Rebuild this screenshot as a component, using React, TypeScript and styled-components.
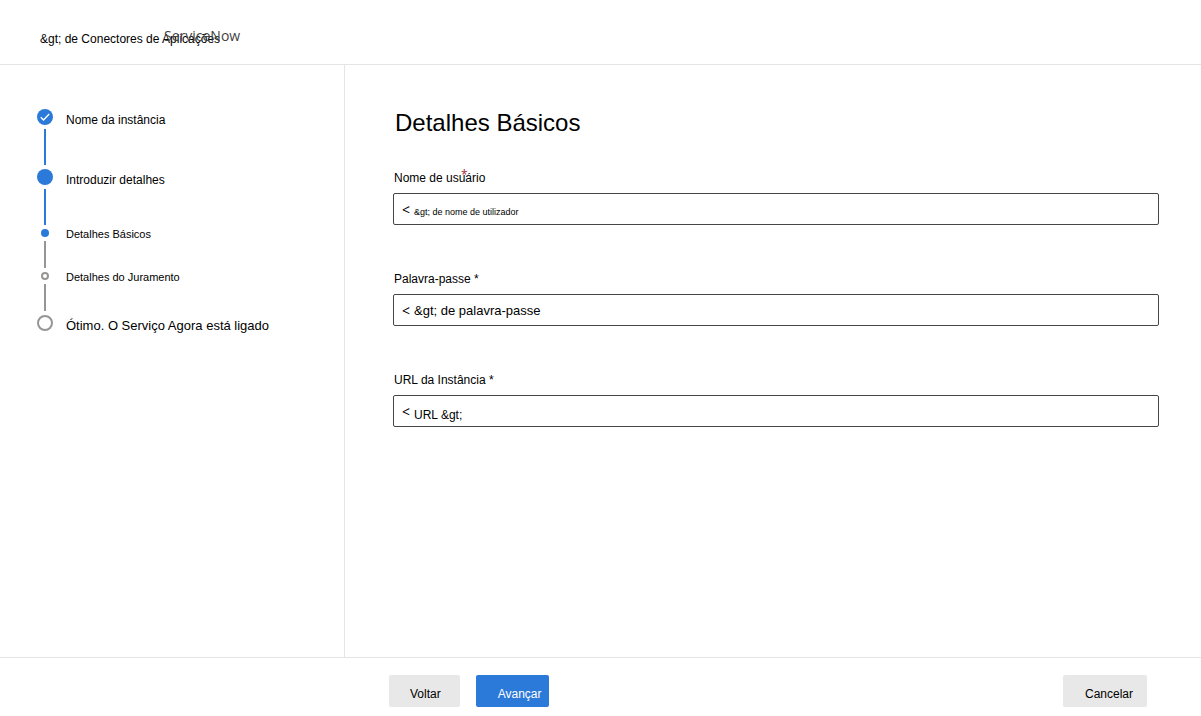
import React from "react";
import styled, { createGlobalStyle, css } from "styled-components";

const GlobalStyle = createGlobalStyle`
  *, *::before, *::after { box-sizing: border-box; }
  body {
    margin: 0;
    background: #fff;
    color: #000;
    font-family: "Liberation Sans", Arial, sans-serif;
    font-size: 12px;
    line-height: 16px;
  }
`;

const blue = "#2b79d8";
const grey = "#979593";
const rule = "#e5e5e5";

const Page = styled.div`
  display: flex;
  flex-direction: column;
  min-height: 100vh;
`;

const Header = styled.header`
  display: flex;
  align-items: center;
  height: 65px;
  padding: 13px 40px 0;
  border-bottom: 1px solid ${rule};
`;

const Crumb = styled.a`
  color: #000;
  font-size: 12px;
  text-decoration: none;
  white-space: nowrap;
`;

const Breadcrumb = styled.nav`
  position: relative;
`;

const Product = styled.span`
  position: absolute;
  left: 124px;
  top: -3px;
  color: #444;
  font-family: "Open Sans", "Noto Sans", sans-serif;
  font-size: 14px;
`;

const Body = styled.div`
  display: flex;
  flex: 1;
`;

const Sidebar = styled.aside`
  flex: 0 0 345px;
  padding: 44px 24px 24px 37px;
  border-right: 1px solid ${rule};
`;

const Steps = styled.ol`
  margin: 0;
  padding: 0;
  list-style: none;
`;

const Step = styled.li`
  display: flex;
  gap: 13px;
`;

const Track = styled.div`
  display: flex;
  flex: 0 0 16px;
  flex-direction: column;
  align-items: center;
  gap: 4px;
  padding-bottom: 4px;
`;

type MarkerKind = "filled" | "hollow";

const Marker = styled.span<{ $kind: MarkerKind; $small?: boolean }>`
  display: flex;
  align-items: center;
  justify-content: center;
  width: ${(p) => (p.$small ? 8 : 16)}px;
  height: ${(p) => (p.$small ? 8 : 16)}px;
  border-radius: 50%;
  ${(p) =>
    p.$kind === "filled"
      ? css`
          background: ${blue};
        `
      : css`
          border: 2px solid ${grey};
        `}
`;

const Connector = styled.span<{ $done?: boolean }>`
  width: 2px;
  height: ${(p) => (p.$done ? 36 : 27)}px;
  background: ${(p) => (p.$done ? blue : grey)};
`;

const StepLabel = styled.span<{ $size: number; $sub?: boolean }>`
  padding-top: ${(p) => (p.$sub ? 0 : 3)}px;
  margin-top: ${(p) => (p.$sub ? -3 : 0)}px;
  font-size: ${(p) => p.$size}px;
  white-space: nowrap;
`;

const Content = styled.main`
  flex: 1;
  min-width: 0;
  padding: 44px 42px 24px 48px;
`;

const Title = styled.h1`
  margin: 0 0 33px 2px;
  font-size: 24px;
  font-weight: 400;
  line-height: 28px;
`;

const Fields = styled.form`
  display: flex;
  flex-direction: column;
  gap: 46px;
`;

const Field = styled.div`
  display: flex;
  flex-direction: column;
  gap: 7px;
`;

const Label = styled.label`
  position: relative;
  align-self: flex-start;
  padding-left: 1px;
`;

const RequiredMark = styled.span`
  position: absolute;
  left: 68px;
  top: -3px;
  color: #a4262c;
  font-family: "Open Sans", "Noto Sans", sans-serif;
`;

const InputBox = styled.div`
  display: flex;
  align-items: center;
  gap: 4px;
  height: 32px;
  padding: 0 8px;
  border: 1px solid #484644;
  border-radius: 2px;
`;

const Prefix = styled.span`
  padding-top: 1px;
  font-family: "Open Sans", "Noto Sans", sans-serif;
  font-size: 14px;
`;

const Input = styled.input<{ $size: number; $drop: number }>`
  flex: 1;
  min-width: 0;
  height: 30px;
  padding: ${(p) => p.$drop}px 0 0;
  border: 0;
  outline: 0;
  background: transparent;
  color: #000;
  font-family: inherit;
  font-size: ${(p) => p.$size}px;
`;

const Footer = styled.footer`
  display: flex;
  gap: 16px;
  padding: 17px 54px 9px 389px;
  border-top: 1px solid ${rule};
`;

const Button = styled.button<{ $primary?: boolean }>`
  height: 32px;
  padding: 5px ${(p) => (p.$primary ? 7 : 19)}px 0 ${(p) => (p.$primary ? 22 : 21)}px;
  border: 0;
  border-radius: 2px;
  background: ${(p) => (p.$primary ? blue : "#e8e8e8")};
  color: ${(p) => (p.$primary ? "#fff" : "#000")};
  font-family: inherit;
  font-size: 12px;
`;

const CancelButton = styled(Button)`
  margin-left: auto;
  padding: 5px 14px 0 22px;
`;

interface StepData {
  label: string;
  kind: MarkerKind;
  size: number;
  sub?: boolean;
  checked?: boolean;
  line?: "done" | "todo";
}

const steps: StepData[] = [
  { label: "Nome da instância", kind: "filled", size: 12, checked: true, line: "done" },
  { label: "Introduzir detalhes", kind: "filled", size: 12, line: "done" },
  { label: "Detalhes Básicos", kind: "filled", size: 11, sub: true, line: "todo" },
  { label: "Detalhes do Juramento", kind: "hollow", size: 11, sub: true, line: "todo" },
  { label: "Ótimo. O Serviço Agora está ligado", kind: "hollow", size: 13 },
];

const fields = [
  { id: "user", label: "Nome de usuário", value: "&gt; de nome de utilizador", size: 9, drop: 5, overlap: true },
  { id: "password", label: "Palavra-passe *", value: "&gt; de palavra-passe", size: 13, drop: 1 },
  { id: "url", label: "URL da Instância *", value: "URL &gt;", size: 12, drop: 7 },
];

export default function App() {
  return (
    <Page>
      <GlobalStyle />
      <Header>
        <Breadcrumb>
          <Crumb href="#">&amp;gt; de Conectores de Aplicações</Crumb>
          <Product>ServiceNow</Product>
        </Breadcrumb>
      </Header>
      <Body>
        <Sidebar>
          <Steps>
            {steps.map((s) => (
              <Step key={s.label}>
                <Track>
                  <Marker $kind={s.kind} $small={s.sub}>
                    {s.checked && (
                      <svg width="16" height="16" viewBox="0 0 16 16" fill="none" aria-hidden="true">
                        <path d="M3.8 8.2l2.7 2.7 5.7-5.8" stroke="#fff" strokeWidth="1.4" />
                      </svg>
                    )}
                  </Marker>
                  {s.line && <Connector $done={s.line === "done"} />}
                </Track>
                <StepLabel $size={s.size} $sub={s.sub}>
                  {s.label}
                </StepLabel>
              </Step>
            ))}
          </Steps>
        </Sidebar>
        <Content>
          <Title>Detalhes Básicos</Title>
          <Fields id="details" onSubmit={(e) => e.preventDefault()}>
            {fields.map((f) => (
              <Field key={f.id}>
                <Label htmlFor={f.id}>
                  {f.label}
                  {f.overlap && <RequiredMark>*</RequiredMark>}
                </Label>
                <InputBox>
                  <Prefix>&lt;</Prefix>
                  <Input id={f.id} type="text" defaultValue={f.value} $size={f.size} $drop={f.drop} />
                </InputBox>
              </Field>
            ))}
          </Fields>
        </Content>
      </Body>
      <Footer>
        <Button type="button">Voltar</Button>
        <Button type="submit" form="details" $primary>
          Avançar
        </Button>
        <CancelButton type="button">Cancelar</CancelButton>
      </Footer>
    </Page>
  );
}
